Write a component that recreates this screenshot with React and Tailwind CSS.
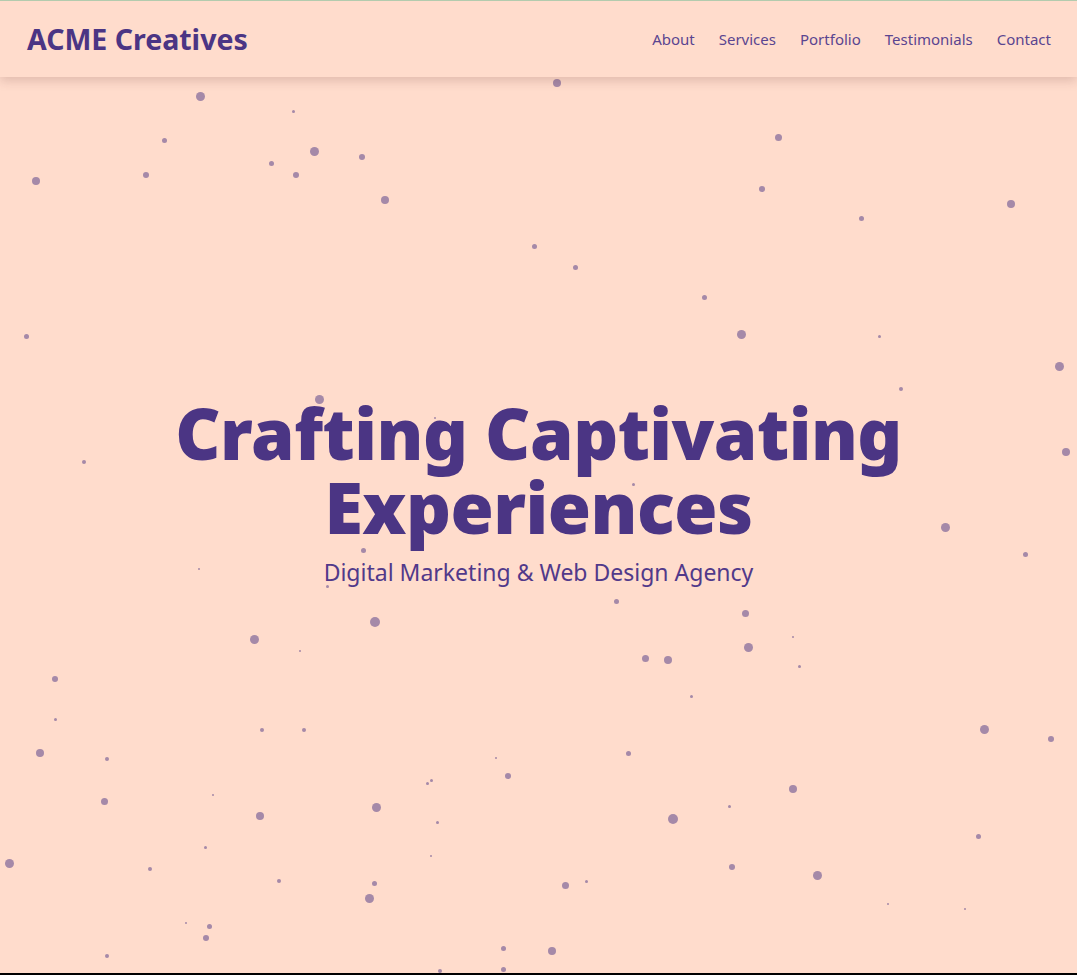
import React from 'react';

// particle positions: [x, y, size]
const dots = [
    [200, 96, 9], [293, 111, 3], [557, 83, 8], [164, 140, 5], [36, 181, 8], [146, 175, 6],
    [271, 163, 5], [314, 151, 9], [296, 175, 6], [362, 157, 6], [385, 200, 8], [778, 137, 7],
    [762, 189, 6], [861, 218, 5], [1011, 204, 8], [534, 246, 5], [575, 267, 5], [704, 297, 5],
    [26, 336, 5], [741, 334, 9], [879, 336, 3], [1059, 366, 9], [901, 389, 4], [319, 399, 9],
    [435, 418, 2], [84, 462, 4], [1066, 452, 8], [633, 484, 3], [678, 517, 3], [945, 527, 9],
    [1025, 554, 5], [363, 550, 5], [199, 569, 2], [327, 586, 3], [616, 601, 5], [375, 622, 10],
    [745, 613, 7], [254, 639, 9], [793, 637, 2], [300, 651, 2], [645, 658, 7], [668, 660, 8],
    [748, 647, 9], [799, 666, 3], [55, 679, 6], [691, 696, 3], [55, 719, 3], [262, 730, 4],
    [304, 730, 4], [984, 729, 9], [1051, 739, 6], [40, 753, 8], [628, 753, 5], [107, 759, 4],
    [496, 758, 2], [508, 776, 6], [431, 780, 3], [427, 783, 3], [213, 795, 2], [104, 801, 7],
    [376, 807, 9], [793, 789, 8], [729, 806, 3], [260, 816, 8], [673, 819, 10], [437, 822, 3],
    [978, 836, 5], [205, 847, 3], [431, 856, 2], [9, 863, 9], [150, 869, 4], [732, 867, 6],
    [817, 875, 9], [279, 881, 4], [374, 883, 5], [586, 881, 3], [565, 885, 7], [369, 898, 9],
    [888, 904, 2], [965, 909, 2], [186, 923, 2], [209, 926, 5], [206, 938, 6], [503, 948, 5],
    [552, 951, 8], [107, 956, 4], [440, 971, 4], [503, 969, 5],
];

const links = ['About', 'Services', 'Portfolio', 'Testimonials', 'Contact'];

export default function App() {
    return (
        <div className="relative h-[975px] overflow-hidden bg-[#ffdccc] border-t border-[#b3cbae] border-b-2 border-b-black font-['Noto_Sans','Open_Sans',sans-serif] text-[#4b3584]">
            {/* particles */}
            <div className="absolute inset-0">
                {dots.map(([x, y, s], i) => (
                    <span
                        key={i}
                        className="absolute rounded-full bg-[#4b3584]/50"
                        style={{ left: x - s / 2, top: y - s / 2 - 1, width: s, height: s }}
                    />
                ))}
            </div>

            {/* hero */}
            <section className="relative flex h-full flex-col items-center justify-center pt-[8px] text-center">
                <h1 className="text-[70px] font-black leading-[74px] tracking-[-0.5px]">
                    Crafting Captivating
                    <br />
                    Experiences
                </h1>
                <p className="mt-[13px] text-[23px] leading-[30px] text-[#51398a]">Digital Marketing &amp; Web Design Agency</p>
            </section>

            {/* header */}
            <header className="absolute left-0 right-0 top-0 flex h-[76px] items-center justify-between bg-[#ffdccc] pl-[27px] pr-[26px] shadow-[0_4px_10px_rgba(90,40,40,0.18)]">
                <div className="text-[28.5px] font-bold">ACME Creatives</div>
                <nav className="flex gap-6 text-[15px] text-[#5a4590]">
                    {links.map((l) => (
                        <a key={l} href="#">{l}</a>
                    ))}
                </nav>
            </header>
        </div>
    );
}
